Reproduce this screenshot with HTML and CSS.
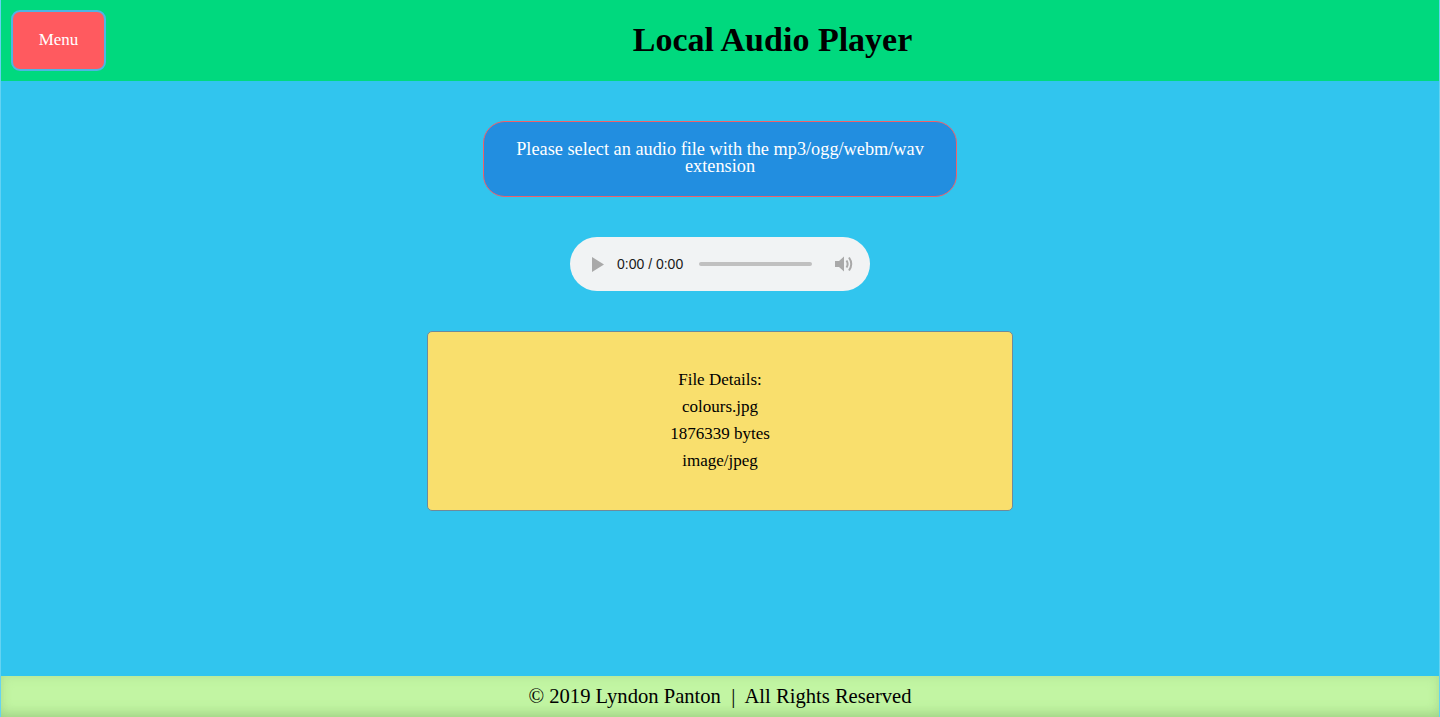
FILE: index.html
```html
<!DOCTYPE html>
<html lang="en">
<head>
<meta charset="utf-8">
<title>Local Audio Player</title>
<link rel="stylesheet" href="styles.css">
</head>
<body>
<div class="page">
  <header class="topbar">
    <button class="menu-btn" type="button">Menu</button>
    <h1 class="title">Local Audio Player</h1>
  </header>
  <main class="content">
    <label class="file-select">Please select an audio file with the mp3/ogg/webm/wav extension</label>
    <div class="player">
      <svg class="play" width="12" height="15" viewBox="0 0 12 15"><path d="M0 0 L12 7.5 L0 15 Z" fill="#a9a9a9"/></svg>
      <span class="time">0:00 / 0:00</span>
      <div class="track"></div>
      <svg class="vol" width="19" height="18" viewBox="0 0 19 18">
        <path d="M0 6 H4 L9 1.5 V16.5 L4 12 H0 Z" fill="#a9a9a9"/>
        <path d="M11.5 5.5 Q13.8 9 11.5 12.5" stroke="#a9a9a9" stroke-width="2" fill="none"/>
        <path d="M14 2.5 Q18.5 9 14 15.5" stroke="#a9a9a9" stroke-width="2" fill="none"/>
      </svg>
    </div>
    <section class="details">
      <p>File Details:</p>
      <p>colours.jpg</p>
      <p>1876339 bytes</p>
      <p>image/jpeg</p>
    </section>
  </main>
  <footer class="footer">© 2019 Lyndon Panton&nbsp; |&nbsp; All Rights Reserved</footer>
</div>
</body>
</html>
```
FILE: styles.css
```css
html, body {
  margin: 0;
  padding: 0;
  height: 100%;
}
body {
  font-family: "Liberation Serif", "Times New Roman", serif;
  background: #31c5ee;
}
.page {
  display: flex;
  flex-direction: column;
  height: 100vh;
  box-sizing: border-box;
  border-left: 1px solid rgba(255,255,255,0.25);
  border-right: 1px solid rgba(255,255,255,0.25);
}
.topbar {
  display: flex;
  align-items: center;
  height: 81px;
  flex: none;
  background: #00d97e;
  padding: 0 0 0 10px;
  box-sizing: border-box;
}
.menu-btn {
  width: 95px;
  height: 61px;
  box-sizing: border-box;
  background: #ff5a5f;
  border: 2px solid #4cb6e4;
  border-radius: 9px;
  color: #fff;
  font-family: inherit;
  font-size: 17px;
  margin-top: -1px;
}
.title {
  flex: 1;
  margin: 0 0 2px;
  text-align: center;
  font-size: 34px;
  font-weight: bold;
  color: #000;
}
.content {
  flex: 1;
  display: flex;
  flex-direction: column;
  align-items: center;
  padding-top: 40px;
  gap: 40px;
}
.file-select {
  display: flex;
  align-items: center;
  justify-content: center;
  width: 474px;
  height: 76px;
  box-sizing: border-box;
  padding: 0 22px 2px;
  background: #228ee0;
  border: 1px solid #f0606a;
  border-radius: 22px;
  color: #fff;
  font-size: 18.3px;
  line-height: 17px;
  text-align: center;
}
.player {
  width: 300px;
  height: 54px;
  box-sizing: border-box;
  border-radius: 27px;
  background: #f1f3f4;
  display: flex;
  align-items: center;
  padding: 0 16px 0 22px;
}
.play {
  flex: none;
}
.time {
  font-family: "Liberation Sans", Arial, sans-serif;
  font-size: 14px;
  color: #1a1a1a;
  margin-left: 13px;
}
.track {
  width: 113px;
  height: 4px;
  border-radius: 2px;
  background: #c0c0c0;
  margin-left: 16px;
}
.vol {
  margin-left: auto;
  margin-right: 0;
}
.details {
  width: 586px;
  height: 180px;
  box-sizing: border-box;
  background: #f9df6d;
  border: 1px solid #6f8a9a;
  border-radius: 5px;
  display: flex;
  flex-direction: column;
  align-items: center;
  justify-content: center;
  padding-bottom: 2px;
  font-size: 17px;
}
.details p {
  margin: 0;
  line-height: 27px;
}
.footer {
  flex: none;
  height: 41px;
  background: #c2f5a3;
  box-shadow: inset 0 -8px 14px -6px rgba(120, 170, 100, 0.45), inset 0 0 12px rgba(120,170,100,0.2);
  display: flex;
  align-items: center;
  justify-content: center;
  font-size: 20.6px;
  color: #000;
}
```
